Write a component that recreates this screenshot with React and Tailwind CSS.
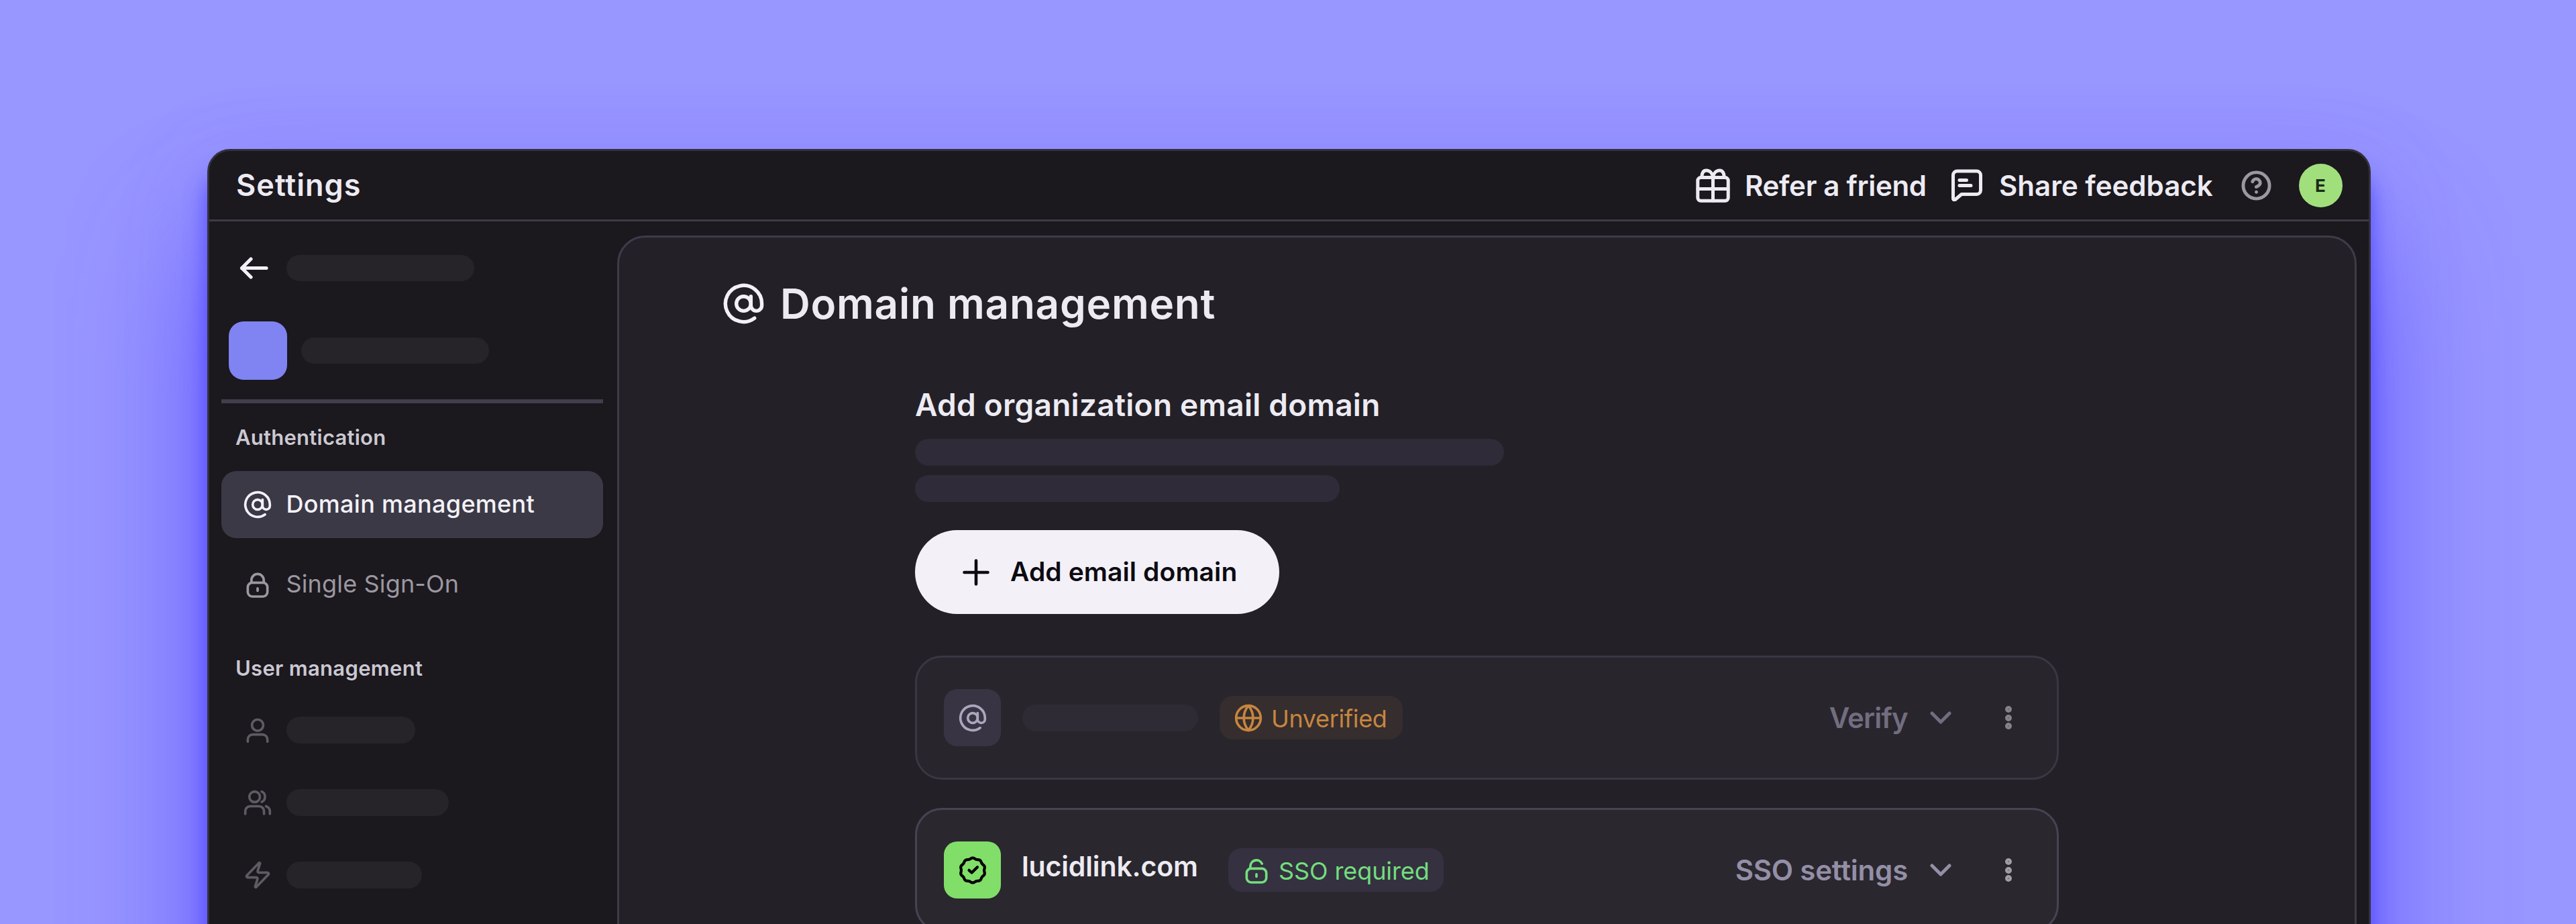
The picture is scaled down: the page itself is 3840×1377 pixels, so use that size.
import { AtSign, Zap, CircleHelp } from "lucide-react";

export default function App() {
  return (
    <div className="w-[3840px] h-[1377px] overflow-hidden bg-[#9896ff] pt-[222px] pl-[309px] font-[Inter,sans-serif]">
      <div className="w-[3225px] h-[1300px] flex flex-col rounded-t-[34px] border-[3px] border-[#33313a] bg-[#1b181e] shadow-[0_38px_32px_rgba(60,50,255,0.7),0_40px_130px_rgba(110,95,255,0.3),0_150px_190px_rgba(94,84,255,0.85)]">
        <Header />
        <div className="flex grow">
          <Sidebar />
          <main className="w-[2593px] mt-[21px] border-[3px] border-[#3e3b4a] rounded-t-[42px] bg-[#232027] pt-[58px]">
            <div className="h-20 pl-[153px] flex items-center gap-[22px]">
              <AtSign className="w-[65px] h-[65px] text-[#f3f1f7]" />
              <h1 className="text-[62px] font-semibold tracking-[0.75px] text-[#edebf2]">Domain management</h1>
            </div>
            <section className="pl-[441px] mt-[81px] flex flex-col items-start">
              <h2 className="h-[60px] leading-[60px] text-[46px] font-semibold tracking-[0.25px] text-[#edebf2]">Add organization email domain</h2>
              <div className="w-[878px] h-10 mt-[21px] rounded-full bg-[#2f2b38]" />
              <div className="w-[633px] h-10 mt-3.5 rounded-full bg-[#2f2b38]" />
              <button className="w-[543px] h-[125px] mt-[42px] pl-[71px] flex items-center gap-[31px] rounded-full bg-[#f3f1f7] text-[#0d0b12]">
                <PlusIcon />
                <span className="text-[39px] font-semibold tracking-[0.1px]">Add email domain</span>
              </button>
              <div className="flex flex-col gap-[42px] mt-[62px]">
                <UnverifiedCard />
                <VerifiedCard />
              </div>
            </section>
          </main>
        </div>
      </div>
    </div>
  );
}

function Header() {
  return (
    <header className="h-[105px] shrink-0 pl-10 pr-[39.5px] flex items-center justify-between border-b-[3px] border-[#3e3b4a] text-[#edebf2]">
      <span className="text-[45px] font-semibold tracking-[1px]">Settings</span>
      <div className="flex items-center text-[42px] font-semibold">
        <GiftIcon />
        <span className="w-[307px] ml-[22.5px] whitespace-nowrap tracking-[-0.3px]">Refer a friend</span>
        <ChatIcon />
        <span className="w-[359.5px] ml-6 whitespace-nowrap">Share feedback</span>
        <CircleHelp className="w-[47px] h-[47px] text-[#9a98a1]" strokeWidth={2.5} />
        <span className="w-[65px] h-[65px] ml-10 rounded-full bg-[#a1df7d] text-[#1d2a17] text-[26px] font-bold flex items-center justify-center">E</span>
      </div>
    </header>
  );
}

function Sidebar() {
  return (
    <nav className="w-[608px] shrink-0 pl-[18px] pr-[21px] pt-[39px]">
      <div className="h-[60px] pl-[27px] flex items-center gap-[26.5px]">
        <BackIcon />
        <div className="w-[280px] h-[39px] rounded-full bg-[#262329]" />
      </div>
      <div className="h-[87px] mt-[50px] pl-[10.5px] flex items-center gap-[21px]">
        <div className="w-[87px] h-[87px] rounded-[22px] bg-[#7f84f2]" />
        <div className="w-[280px] h-[39px] rounded-full bg-[#262329]" />
      </div>
      <div className="h-1.5 mt-[29px] bg-[#413e4e]" />

      <h3 className="h-10 leading-10 mt-[31px] pl-[21px] text-[31px] font-semibold tracking-[0.25px] text-[#cbc8d1]">Authentication</h3>
      <div className="h-[100px] mt-[30px] pl-[31.5px] flex items-center gap-[21px] rounded-[22px] bg-[#3b3946] text-[#f3f1f7]">
        <AtSign className="w-11 h-11" />
        <span className="text-[36px] font-medium tracking-[0.3px] pb-[2px]">Domain management</span>
      </div>
      <div className="h-[100px] mt-[19px] pl-[31.5px] flex items-center gap-[21px] text-[#9b98a1]">
        <LockIcon />
        <span className="text-[36px] tracking-[0.15px] pb-[2px]">Single Sign-On</span>
      </div>

      <h3 className="h-10 leading-10 mt-[55px] pl-[21px] text-[31px] font-semibold tracking-[0.3px] text-[#cbc8d1]">User management</h3>
      <div className="flex flex-col gap-12 mt-[42px] pl-[31.5px] text-[#5e5b63]">
        <div className="h-[60px] flex items-center gap-[21px]">
          <UserIcon />
          <div className="w-[192px] h-10 rounded-full bg-[#262329]" />
        </div>
        <div className="h-[60px] flex items-center gap-[21px]">
          <UsersIcon />
          <div className="w-[242px] h-10 rounded-full bg-[#262329]" />
        </div>
        <div className="h-[60px] flex items-center gap-[21px]">
          <Zap className="w-11 h-11" />
          <div className="w-[202px] h-10 rounded-full bg-[#262329]" />
        </div>
      </div>
    </nav>
  );
}

function UnverifiedCard() {
  return (
    <div className="w-[1705px] h-[185px] pl-10 flex items-center rounded-[40px] border-[3px] border-[#3a3744] bg-[#28252c]">
      <div className="w-[85px] h-[85px] flex items-center justify-center rounded-[20px] bg-[#393443] text-[#aba6bd]">
        <AtSign className="w-11 h-11" />
      </div>
      <div className="w-[262px] h-10 ml-8 rounded-full bg-[#2e2b35]" />
      <div className="w-[273px] h-[65px] ml-8 pl-[21px] flex items-center gap-3 rounded-[20px] bg-[#362d2e] text-[#c6863f]">
        <GlobeIcon />
        <span className="text-[36px] tracking-[-0.35px] pt-[3px]">Unverified</span>
      </div>
      <CardActions label="Verify" color="text-[#726d80]" tracking="tracking-[-0.8px]" dot="border-[#85828b]" />
    </div>
  );
}

function VerifiedCard() {
  return (
    <div className="w-[1705px] h-[185px] pl-10 flex items-center rounded-[40px] border-[3px] border-[#474355] bg-[#2a272e]">
      <div className="w-[85px] h-[85px] flex items-center justify-center rounded-[20px] bg-[#81de69] text-black">
        <SealIcon />
      </div>
      <span className="w-[308px] ml-[31px] pb-[9px] text-[41px] font-semibold tracking-[-0.15px] text-[#edebf2]">lucidlink.com</span>
      <div className="w-[321px] h-[65px] pl-5 flex items-center gap-[11px] rounded-[20px] bg-[#353140] text-[#73de7e]">
        <UnlockIcon />
        <span className="text-[36px] tracking-[-0.1px] pt-[3px] whitespace-nowrap">SSO required</span>
      </div>
      <CardActions label="SSO settings" color="text-[#948fa7]" tracking="tracking-[-0.2px]" dot="border-[#a09da6]" />
    </div>
  );
}

function CardActions({ label, color, tracking, dot }) {
  return (
    <div className={`ml-auto pr-[67px] flex items-center ${color}`}>
      <span className={`text-[42px] font-semibold mr-[33px] ${tracking}`}>{label}</span>
      <svg className="w-8 h-[19px] mr-20" viewBox="0 0 32 19" fill="none" stroke="currentColor" strokeWidth="5" strokeLinecap="round" strokeLinejoin="round">
        <path d="M3 3l13 13L29 3" />
      </svg>
      <div className="flex flex-col gap-[2.5px]">
        {[0, 1, 2].map((i) => (
          <div key={i} className={`w-2.5 h-2.5 rounded-full border-4 bg-[#66636c] ${dot}`} />
        ))}
      </div>
    </div>
  );
}

function Icon({ children, width = 2 }) {
  return (
    <svg className="w-11 h-11 shrink-0" viewBox="0 0 24 24" fill="none" stroke="currentColor" strokeWidth={width} strokeLinecap="round" strokeLinejoin="round">
      {children}
    </svg>
  );
}

function LockIcon() {
  return (
    <Icon>
      <rect x="4" y="10.6" width="16" height="11.2" rx="3.6" />
      <path d="M7 10.4V8.5a5 5 0 0 1 10 0v1.9M12 15.2v2" />
    </Icon>
  );
}

function UnlockIcon() {
  return (
    <Icon>
      <rect x="4" y="10.6" width="16" height="11.2" rx="3.6" />
      <path d="M7 10.4V8.7a5 5 0 0 1 9.5-2.1M12 15.2v2" />
    </Icon>
  );
}

function UserIcon() {
  return (
    <Icon>
      <circle cx="12" cy="8" r="4.6" />
      <path d="M4 21.4v-1.8a4 4 0 0 1 4-4h8a4 4 0 0 1 4 4v1.8" />
    </Icon>
  );
}

function UsersIcon() {
  return (
    <Icon>
      <circle cx="9.6" cy="7.4" r="4.3" />
      <path d="M2 21.2v-2.2a4 4 0 0 1 4-4h7.2a4 4 0 0 1 4 4v2.2" />
      <path d="M15.3 3.1c3.6 1.6 3.6 6.8 0 8.4M18.8 15c1.9.6 3.2 2.2 3.2 4.2v2" />
    </Icon>
  );
}

function GlobeIcon() {
  return (
    <Icon>
      <circle cx="12" cy="12" r="10" />
      <path d="M2 12h20M12 2c-5 6-5 14 0 20M12 2c5 6 5 14 0 20" />
    </Icon>
  );
}

// wavy outline with ten soft bumps, the first one at the top
const sealPoints = Array.from({ length: 120 }, (_, i) => {
  const a = (i / 120) * Math.PI * 2;
  const r = 9.7 + 0.4 * Math.cos(a * 10);
  return `${(12 + r * Math.sin(a)).toFixed(2)},${(12 - r * Math.cos(a)).toFixed(2)}`;
}).join(" ");

function SealIcon() {
  return (
    <Icon width={2.3}>
      <polygon points={sealPoints} />
      <path d="M9 11.9l2.2 2 4.6-4.5" />
    </Icon>
  );
}

function BackIcon() {
  return (
    <svg className="w-[43px] h-[43px] text-[#f3f1f7]" viewBox="0 0 43 43" fill="none" stroke="currentColor" strokeWidth="5.2" strokeLinecap="round" strokeLinejoin="round">
      <path d="M40 21.5H3.5M17 8L3.5 21.5L17 35" />
    </svg>
  );
}

function PlusIcon() {
  return (
    <svg className="w-10 h-10" viewBox="0 0 40 40" fill="none" stroke="currentColor" strokeWidth="4.6" strokeLinecap="round">
      <path d="M20 2.5v35M2.5 20h35" />
    </svg>
  );
}

function GiftIcon() {
  return (
    <svg className="w-[51px] h-[51px]" viewBox="0 0 51 51" fill="none" stroke="currentColor" strokeWidth="5" strokeLinecap="round" strokeLinejoin="round">
      <rect x="2.8" y="13.6" width="45.4" height="34.6" rx="4.5" />
      <path d="M3 30.5h45M25.5 13.5v34.5" />
      <path d="M9.2 13c-.8-5 1.8-10 6.3-10C21 3 24.5 7.5 25.5 12.5C26.5 7.5 30 3 35.500 3c4.5 0 7.1 5 6.3 10" />
    </svg>
  );
}

function ChatIcon() {
  return (
    <svg className="w-12 h-12" viewBox="0 0 48 48" fill="none" stroke="currentColor" strokeWidth="5" strokeLinecap="round" strokeLinejoin="round">
      <path d="M3.5 9a6 6 0 0 1 6-6h29a6 6 0 0 1 6 6v22.500a6 6 0 0 1-6 6H16l-9.500 8c-1.5 1.1-3 .3-3-1.5z" />
      <path d="M13 16.500h10.5M13 24.5h17" />
    </svg>
  );
}
